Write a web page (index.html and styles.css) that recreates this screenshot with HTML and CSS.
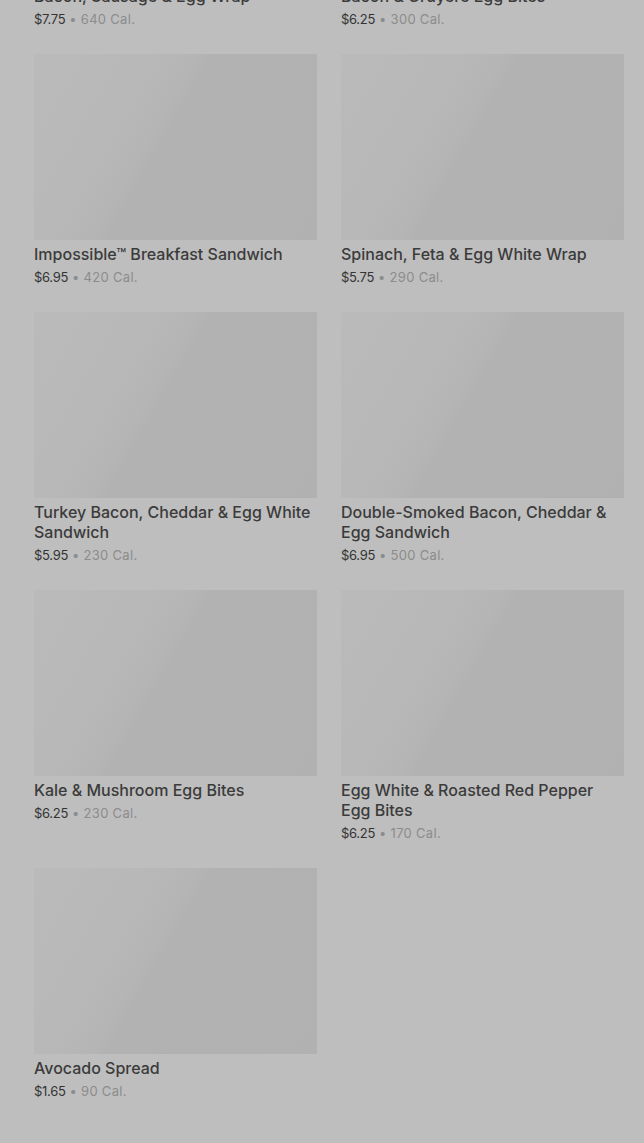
FILE: index.html
```html
<!DOCTYPE html>
<html>
  <head>
    <link rel="stylesheet" href="styles.css">
  </head>
  <body>
    <div class="menu">
      <div class="item">
        <div class="thumb"></div>
        <p class="name">Bacon, Sausage &amp; Egg Wrap</p>
        <p class="info"><span class="price">$7.75</span> • 640 Cal.</p>
      </div>
      <div class="item">
        <div class="thumb"></div>
        <p class="name">Bacon &amp; Gruyère Egg Bites</p>
        <p class="info"><span class="price">$6.25</span> • 300 Cal.</p>
      </div>
      <div class="item">
        <div class="thumb"></div>
        <p class="name">Impossible™ Breakfast Sandwich</p>
        <p class="info"><span class="price">$6.95</span> • 420 Cal.</p>
      </div>
      <div class="item">
        <div class="thumb"></div>
        <p class="name">Spinach, Feta &amp; Egg White Wrap</p>
        <p class="info"><span class="price">$5.75</span> • 290 Cal.</p>
      </div>
      <div class="item">
        <div class="thumb"></div>
        <p class="name">Turkey Bacon, Cheddar &amp; Egg White Sandwich</p>
        <p class="info"><span class="price">$5.95</span> • 230 Cal.</p>
      </div>
      <div class="item">
        <div class="thumb"></div>
        <p class="name">Double-Smoked Bacon, Cheddar &amp; Egg Sandwich</p>
        <p class="info"><span class="price">$6.95</span> • 500 Cal.</p>
      </div>
      <div class="item">
        <div class="thumb"></div>
        <p class="name">Kale &amp; Mushroom Egg Bites</p>
        <p class="info"><span class="price">$6.25</span> • 230 Cal.</p>
      </div>
      <div class="item">
        <div class="thumb"></div>
        <p class="name">Egg White &amp; Roasted Red Pepper Egg Bites</p>
        <p class="info"><span class="price">$6.25</span> • 170 Cal.</p>
      </div>
      <div class="item">
        <div class="thumb"></div>
        <p class="name">Avocado Spread</p>
        <p class="info"><span class="price">$1.65</span> • 90 Cal.</p>
      </div>
    </div>
  </body>
</html>
```

FILE: styles.css
```css
* {
  margin: 0;
  padding: 0;
  box-sizing: border-box;
}
body {
  background-color: #bebebe;
  font-family: Inter, "Noto Sans", sans-serif;
  overflow: hidden;
}
/* list is scrolled: first row sits above the fold */
.menu {
  display: grid;
  grid-template-columns: 1fr 1fr;
  column-gap: 24px;
  row-gap: 26px;
  padding: 0 20px 40px 34px;
  margin-top: -204px;
}
.thumb {
  height: 186px;
  background: linear-gradient(120deg, #bababa 0%, #b9b9b9 20%, #b7b7b7 34%, #b5b5b5 42%, #b2b2b2 46%, #b1b1b1 100%);
}
.name {
  margin-top: 4px;
  font-size: 16px;
  line-height: 20px;
  font-weight: 500;
  color: #3b3b3b;
}
.info {
  margin-top: 4px;
  font-size: 13px;
  line-height: 18px;
  color: #8c8c8c;
  letter-spacing: 0.3px;
}
.price {
  color: #343434;
  letter-spacing: -0.3px;
}
```
